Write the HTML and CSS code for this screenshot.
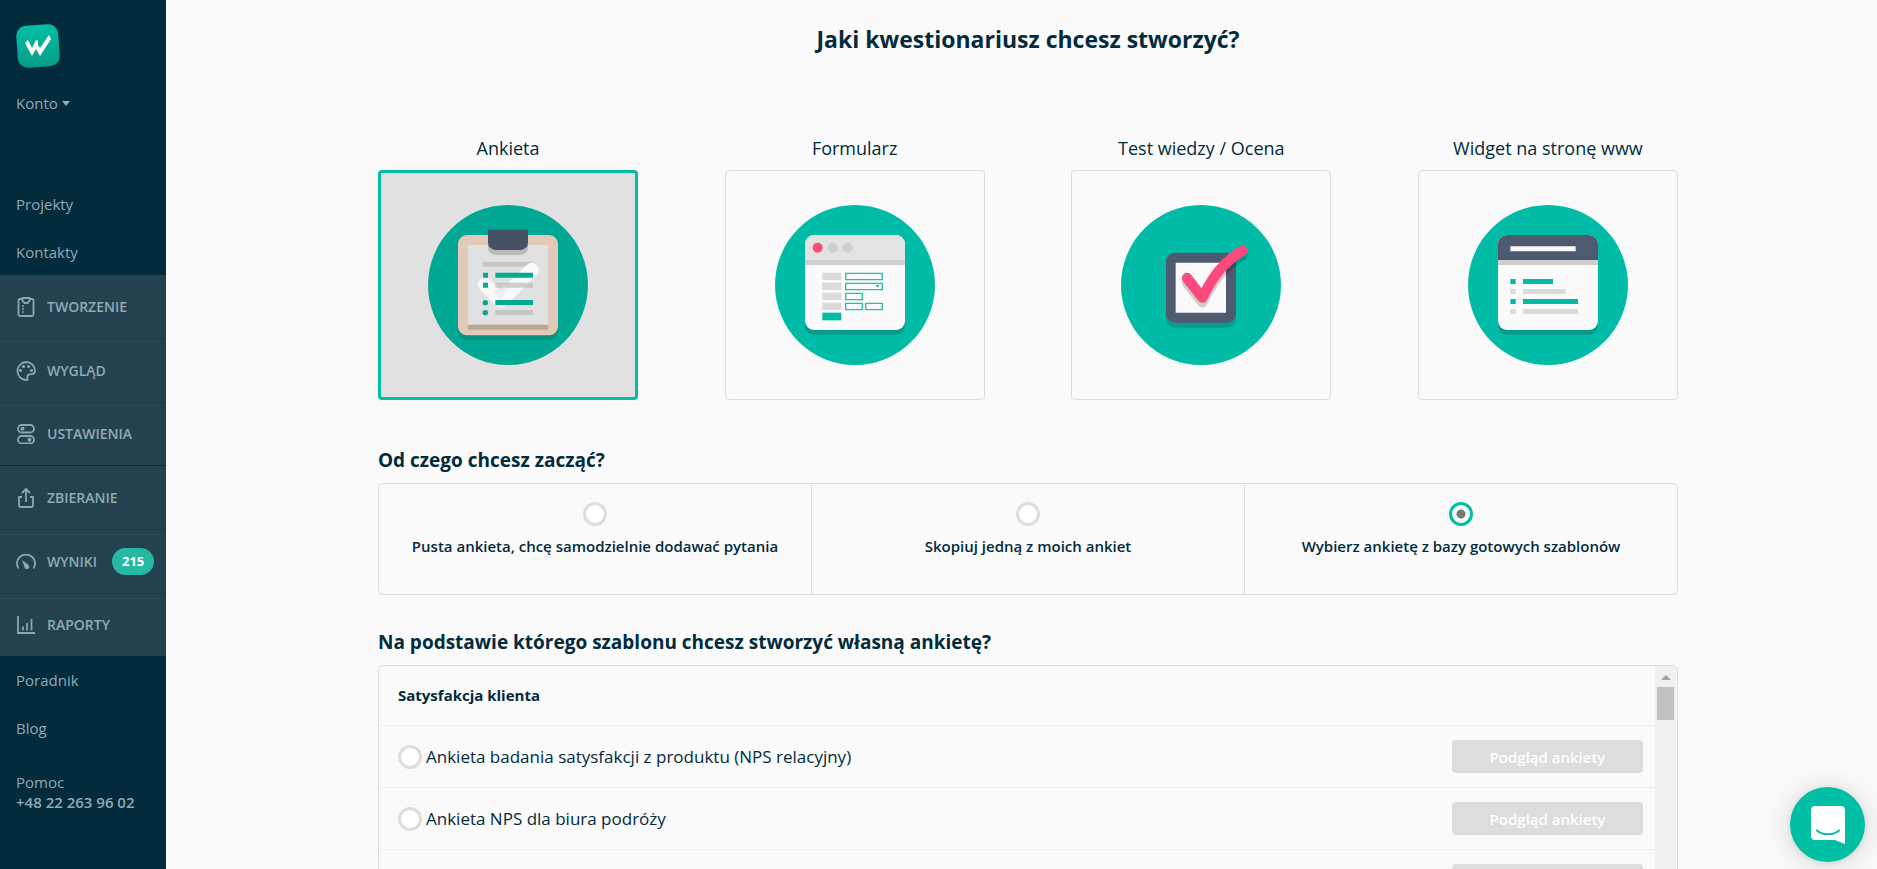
FILE: index.html
```
<!DOCTYPE html>
<html lang="pl">
<head>
  <meta charset="UTF-8">
  <meta name="viewport" content="width=device-width, initial-scale=1">
  <title>Nowy kwestionariusz</title>
  <link rel="stylesheet" href="styles.css">
</head>
<body>
  <aside class="sidebar">
    <a href="#" class="logo" aria-label="Strona główna">
      <svg width="44" height="44" viewBox="0 0 44 44">
        <defs>
          <linearGradient id="logo-bg" x1="0" y1="0" x2="0" y2="1">
            <stop offset="0" stop-color="#00bfa5"/>
            <stop offset="1" stop-color="#079c87"/>
          </linearGradient>
        </defs>
        <rect x="1" y="1" width="42" height="42" rx="10" fill="url(#logo-bg)" transform="rotate(-4 22 22)"/>
        <path d="M9 19l3-3 4 8 4-8 2 1v4l2 3 9-13 2 4-11 17-4-7-4 7z" fill="#fff"/>
      </svg>
    </a>
    <a href="#" class="account">Konto <span class="caret"></span></a>

    <nav class="links links-top">
      <a href="#">Projekty</a>
      <a href="#">Kontakty</a>
    </nav>

    <nav class="steps">
      <a href="#">
        <svg class="icon" viewBox="0 0 20 20"><path d="M6 2H4a1.500 1.500 0 0 0-1.500 1.500v14A1.500 1.500 0 0 0 4 19h12a1.500 1.500 0 0 0 1.500-1.500v-14A1.500 1.500 0 0 0 16 2h-2M6.500 1h7v3l-2 2h-3l-2-2z"/><g class="fill"><circle cx="7" cy="9" r="1"/><circle cx="7" cy="12" r="1"/><circle cx="7" cy="15" r="1"/></g></svg>
        TWORZENIE
      </a>
      <a href="#">
        <svg class="icon" viewBox="0 0 20 20"><path d="M10 1a9 9 0 1 0 1 18c2-1-1-3 1-5s7 1 7-4c0-5-4-9-9-9z"/><g class="fill"><circle cx="4.500" cy="9.500" r="1.600"/><circle cx="7.500" cy="5.500" r="1.600"/><circle cx="12.500" cy="5.500" r="1.600"/><circle cx="15.500" cy="9.500" r="1.600"/></g></svg>
        WYGLĄD
      </a>
      <a href="#">
        <svg class="icon" viewBox="0 0 20 20"><rect x="2" y="1" width="16" height="7.500" rx="3.700"/><rect x="2" y="12" width="16" height="7.500" rx="3.700"/><g class="fill"><circle cx="6.500" cy="4.700" r="2"/><circle cx="13.500" cy="15.700" r="2"/></g></svg>
        USTAWIENIA
      </a>
    </nav>
    <nav class="steps">
      <a href="#">
        <svg class="icon" viewBox="0 0 20 20"><path d="M6 9H3v8a2 2 0 0 0 2 2h10a2 2 0 0 0 2-2V9h-3M10 14V1M6 5l4-4 4 4"/></svg>
        ZBIERANIE
      </a>
      <a href="#">
        <svg class="icon" viewBox="0 0 20 20"><path d="M2.500 16.500a9 9 0 1 1 15 0"/><path class="fill" d="M6 8l6 4.500c3 2.500 0 6-3 4z"/></svg>
        WYNIKI
        <span class="badge">215</span>
      </a>
      <a href="#">
        <svg class="icon" viewBox="0 0 20 20"><path d="M2 1v17h17M7 15.500v-4M11 15.500V8M15.500 15.500V4"/></svg>
        RAPORTY
      </a>
    </nav>

    <nav class="links links-bottom">
      <a href="#">Poradnik</a>
      <a href="#">Blog</a>
    </nav>
    <div class="help">
      Pomoc<br>
      <a href="tel:+48222639602">+48 22 263 96 02</a>
    </div>
  </aside>

  <main class="main">
    <div class="content">
      <h1>Jaki kwestionariusz chcesz stworzyć?</h1>

      <div class="types">
        <div class="type">
          <label for="type-survey">Ankieta</label>
          <button class="card selected" id="type-survey" type="button">
            <svg viewBox="0 0 480 480">
              <circle cx="240" cy="240" r="240" fill="#00a894"/>
              <rect x="90" y="103" width="300" height="301" rx="27" fill="#079280"/>
              <rect x="90" y="90" width="300" height="301" rx="27" fill="#e1cab9"/>
              <path d="M120 120h240v239H120z" fill="#e1e1e1"/>
              <path d="M120 359h240v15H120z" fill="#baa898"/>
              <path d="M180 90h120v38a22 22 0 0 1-22 22h-76a22 22 0 0 1-22-22z" fill="#bbb"/>
              <path d="M180 74h120v39a22 22 0 0 1-22 22h-76a22 22 0 0 1-22-22z" fill="#465165"/>
              <path d="M165 170h150v15H165zM202 233h113v15H202zM202 315h113v15H202z" fill="#c5c6c6"/>
              <path d="M172 239l47 47 92-91" fill="none" stroke="#fafafa" stroke-width="43" stroke-linecap="round" stroke-linejoin="round"/>
              <path d="M196 262l23-23 31 0-31 47z" fill="#e1e1e1" opacity="0.400"/>
              <path d="M202 233h15l6 15h-21zM230 240l8-7h77v15h-85z" fill="#c9c9c9" opacity="0.900"/>
              <path d="M202 203h113v15H202zM202 285h113v15H202zM165 203h15v15h-15zM165 233h15v15h-15z" fill="#00ab96"/>
              <circle cx="172" cy="293" r="8" fill="#00a894"/>
              <circle cx="172" cy="323" r="8" fill="#00a894"/>
            </svg>
          </button>
        </div>
        <div class="type">
          <label for="type-form">Formularz</label>
          <button class="card" id="type-form" type="button">
            <svg viewBox="0 0 480 480">
              <circle cx="240" cy="240" r="240" fill="#00bba5"/>
              <rect x="90" y="104" width="300" height="285" rx="27" fill="#069c89"/>
              <rect x="90" y="90" width="300" height="285" rx="27" fill="#fafafa"/>
              <path d="M90 165v-48a27 27 0 0 1 27-27h246a27 27 0 0 1 27 27v48z" fill="#e3e3e3"/>
              <path d="M90 165h300v15H90z" fill="#cfcfcf"/>
              <circle cx="128" cy="128" r="15" fill="#fc4a7c"/>
              <circle cx="173" cy="128" r="15" fill="#cfcfcf"/>
              <circle cx="218" cy="128" r="15" fill="#cfcfcf"/>
              <path d="M142 203h57v22h-57zM142 233h57v22h-57zM142 263h57v22h-57zM142 293h57v22h-57z" fill="#dadada"/>
              <path d="M142 323h57v23h-57z" fill="#00bba5"/>
              <path d="M212 205h110v19H212zM212 235h110v19H212zM212 265h50v19h-50zM212 295h50v19h-50zM272 295h50v19h-50z" fill="none" stroke="#25bfac" stroke-width="4"/>
              <path d="M301 240h13l-6 8z" fill="#25bfac"/>
            </svg>
          </button>
        </div>
        <div class="type">
          <label for="type-test">Test wiedzy / Ocena</label>
          <button class="card" id="type-test" type="button">
            <svg viewBox="0 0 480 480">
              <circle cx="240" cy="240" r="240" fill="#00bba5"/>
              <rect x="135" y="158" width="210" height="210" rx="27" fill="#0a9c89"/>
              <rect x="135" y="143" width="210" height="210" rx="27" fill="#4d5a70"/>
              <path d="M164 173h151v150H164z" fill="#fafafa"/>
              <path d="M198 233l46 59c30-60 60-104 120-141" fill="none" stroke="#000" stroke-opacity="0.180" stroke-width="31" stroke-linecap="round" stroke-linejoin="round"/>
              <path d="M198 219l46 59c30-60 60-104 120-141" fill="none" stroke="#fc4a7c" stroke-width="31" stroke-linecap="round" stroke-linejoin="round"/>
            </svg>
          </button>
        </div>
        <div class="type">
          <label for="type-widget">Widget na stronę www</label>
          <button class="card" id="type-widget" type="button">
            <svg viewBox="0 0 480 480">
              <circle cx="240" cy="240" r="240" fill="#00bba5"/>
              <rect x="90" y="104" width="300" height="285" rx="27" fill="#069c89"/>
              <rect x="90" y="90" width="300" height="285" rx="27" fill="#fafafa"/>
              <path d="M90 165v-48a27 27 0 0 1 27-27h246a27 27 0 0 1 27 27v48z" fill="#4d5a70"/>
              <path d="M90 165h300v15H90z" fill="#cfcfcf"/>
              <path d="M127 124h196v15H127z" fill="#fafafa"/>
              <path d="M127 222h16v15h-16zM165 222h90v15h-90zM127 282h16v15h-16zM165 282h165v15H165z" fill="#00bba5"/>
              <path d="M127 252h16v15h-16zM165 252h128v15H165zM127 312h16v15h-16zM165 312h165v15H165z" fill="#dadada"/>
            </svg>
          </button>
        </div>
      </div>

      <h2>Od czego chcesz zacząć?</h2>
      <div class="starts">
        <label><input type="radio" name="start">Pusta ankieta, chcę samodzielnie dodawać pytania</label>
        <label><input type="radio" name="start">Skopiuj jedną z moich ankiet</label>
        <label><input type="radio" name="start" checked>Wybierz ankietę z bazy gotowych szablonów</label>
      </div>

      <h2>Na podstawie którego szablonu chcesz stworzyć własną ankietę?</h2>
      <div class="templates">
        <div class="list">
          <h3>Satysfakcja klienta</h3>
          <div class="row">
            <label><input type="radio" name="template">Ankieta badania satysfakcji z produktu (NPS relacyjny)</label>
            <button class="preview" type="button">Podgląd ankiety</button>
          </div>
          <div class="row">
            <label><input type="radio" name="template">Ankieta NPS dla biura podróży</label>
            <button class="preview" type="button">Podgląd ankiety</button>
          </div>
          <div class="row">
            <label><input type="radio" name="template" aria-label="Szablon"></label>
            <button class="preview" type="button" aria-label="Podgląd"></button>
          </div>
        </div>
        <div class="scrollbar">
          <span class="arrow"></span>
          <span class="thumb"></span>
        </div>
      </div>
    </div>
  </main>

  <button class="chat" type="button" aria-label="Czat">
    <svg width="34" height="38" viewBox="0 0 34 38">
      <path d="M4 0h26a4 4 0 0 1 4 4v34l-10-4H4a4 4 0 0 1-4-4V4a4 4 0 0 1 4-4z" fill="#fff"/>
      <path d="M6 24.500c6 5 16 5 22 0" fill="none" stroke="#00bfa5" stroke-width="2" stroke-linecap="round"/>
    </svg>
  </button>
</body>
</html>
```

FILE: styles.css
```
* {
  box-sizing: border-box;
}
body {
  margin: 0;
  display: flex;
  height: 100vh;
  overflow: hidden;
  background: #fafafa;
  color: #022b3c;
  font-family: "Open Sans", sans-serif;
  font-size: 15px;
  line-height: 20px;
}
button {
  font-family: inherit;
  border: none;
  cursor: pointer;
}
a {
  color: inherit;
  text-decoration: none;
}

/* sidebar */
.sidebar {
  flex: 0 0 166px;
  background: #022b3c;
  color: #90aab5;
}
.logo {
  display: block;
  height: 44px;
  margin: 24px 0 0 16px;
}
.account {
  display: flex;
  align-items: center;
  gap: 4px;
  margin: 25px 16px 67px;
}
.caret {
  border: 4px solid transparent;
  border-top: 5px solid #90aab5;
  border-bottom: 0;
}
.links {
  height: 95px;
}
.links a {
  display: block;
  padding: 14px 16px;
}
.links-bottom a {
  padding-top: 13px;
  padding-bottom: 15px;
}
.steps a {
  display: flex;
  align-items: center;
  height: 64px;
  padding-left: 16px;
  background: #24414f;
  border-bottom: 1px solid #1b3847;
  font-size: 14px;
  font-weight: 600;
}
.steps a:last-child {
  height: 63px;
  border-bottom-color: #022b3c;
}
.icon {
  width: 20px;
  height: 20px;
  margin-right: 11px;
  fill: none;
  stroke: #8ca5b0;
  stroke-width: 1.8;
}
.icon .fill {
  fill: #8ca5b0;
  stroke: none;
}
.badge {
  margin-left: 15px;
  padding: 3px 10px 4px;
  border-radius: 14px;
  background: #26b8a0;
  color: #fff;
  font-size: 13px;
  font-weight: 700;
}
.help {
  padding: 20px 16px;
}
.help a {
  font-weight: 600;
}

/* main */
.main {
  flex: 1;
  padding-left: 13px;
  overflow: hidden;
}
.content {
  max-width: 1300px;
  margin: 0 auto;
}
h1 {
  margin: 24px 0 79px;
  font-size: 23px;
  line-height: 30px;
  font-weight: 700;
  text-align: center;
}
.types {
  display: flex;
  justify-content: space-between;
  margin-bottom: 45px;
}
.type {
  width: 20%;
  text-align: center;
}
.type label {
  display: block;
  margin-bottom: 7px;
  font-size: 18px;
  line-height: 30px;
  font-weight: 500;
}
.card {
  display: flex;
  align-items: center;
  justify-content: center;
  width: 100%;
  height: 230px;
  padding: 0;
  background: #fafafa;
  border: 1px solid #ddd;
  border-radius: 4px;
}
.card.selected {
  background: #e1e1e1;
  border: 3px solid #00bfa5;
}
.card svg {
  width: 160px;
  height: 160px;
}
h2 {
  margin: 0 0 8px;
  font-size: 19px;
  line-height: 30px;
  font-weight: 700;
}
input[type="radio"] {
  appearance: none;
  flex: none;
  width: 24px;
  height: 24px;
  margin: 0;
  border: 3px solid #ddd;
  border-radius: 50%;
  background: #fff;
}
input[type="radio"]:checked {
  border-color: #00bfa5;
  background: radial-gradient(circle, #777872 4px, #fff 5px);
}
.starts {
  display: flex;
  height: 112px;
  margin-bottom: 32px;
  border: 1px solid #ddd;
  border-radius: 5px;
}
.starts label {
  flex: 1;
  display: flex;
  flex-direction: column;
  align-items: center;
  gap: 10px;
  padding-top: 18px;
  font-weight: 600;
}
.starts label + label {
  border-left: 1px solid #ddd;
}
.templates {
  display: flex;
  height: 400px;
  padding-right: 1px;
  border: 1px solid #ddd;
  border-radius: 5px;
}
.list {
  flex: 1;
}
h3 {
  margin: 0;
  padding: 19px 19px 20px;
  font-size: 15px;
  line-height: 20px;
  font-weight: 700;
}
.row {
  display: flex;
  align-items: center;
  justify-content: space-between;
  height: 62px;
  padding: 0 12px 0 19px;
  border-top: 1px solid #eee;
}
.row label {
  display: flex;
  align-items: center;
  gap: 4px;
  font-size: 17px;
}
.preview {
  width: 191px;
  height: 33px;
  border-radius: 4px;
  background: #ddd;
  color: #fff;
  font-size: 15px;
  font-weight: 600;
}
.scrollbar {
  width: 21px;
  padding: 9px 2px 0;
  background: #f0f0f0;
}
.arrow {
  display: block;
  width: 0;
  margin: 0 auto 7px;
  border: 5px solid transparent;
  border-top: 0;
  border-bottom-color: #a3a3a3;
}
.thumb {
  display: block;
  height: 33px;
  background: #c1c1c3;
}

/* chat launcher */
.chat {
  position: fixed;
  right: 12px;
  bottom: 7px;
  display: flex;
  align-items: center;
  justify-content: center;
  width: 75px;
  height: 75px;
  border-radius: 50%;
  background: #00bfa5;
  box-shadow: 0 1px 6px rgba(0, 0, 0, 0.1), 0 2px 30px rgba(0, 0, 0, 0.15);
}
```
